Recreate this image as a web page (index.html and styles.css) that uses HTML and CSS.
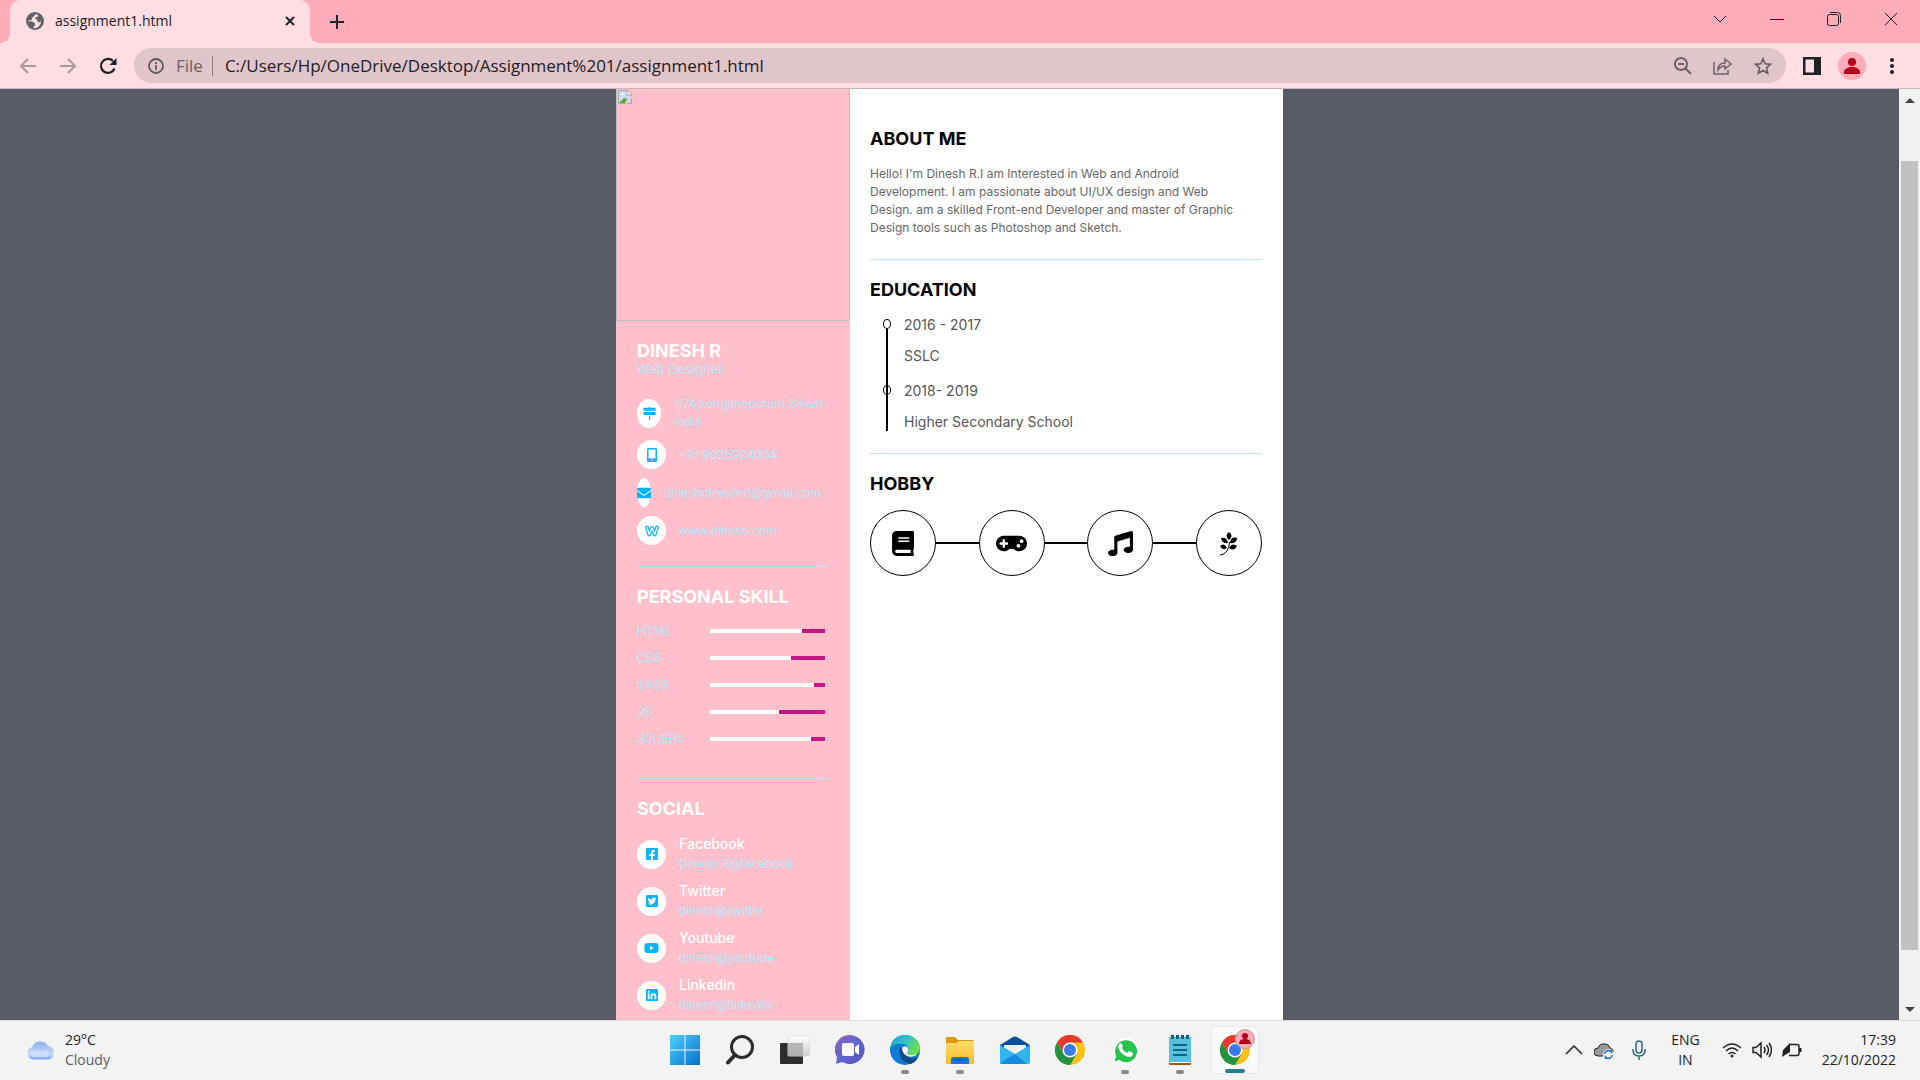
FILE: index.html
```html
<!DOCTYPE html>
<html lang="en">
<head>
<meta charset="utf-8">
<title>assignment1.html</title>
<link rel="stylesheet" href="styles.css">
</head>
<body>
<header class="tabstrip">
  <div class="tab">
    <svg class="favicon" viewBox="0 0 18 18"><circle cx="9" cy="9" r="9" fill="#5f6368"/><path d="M10 2c-2 1-1 2-3 3s0 2-2 3-3 0-3 2c1-1 4-1 5 0s2 0 2 2-1 2-2 4c5 1 8-3 8-7-1 1-2 2-3 1s0-2-2-3 0-2 1-2 1-1 1-2z" fill="#ffdde3"/></svg>
    <span class="tab-title">assignment1.html</span>
    <button class="icon-btn" aria-label="Close tab"><svg width="10" height="10" viewBox="0 0 10 10"><path d="M1 1l8 8M9 1l-8 8" stroke="#202124" stroke-width="2"/></svg></button>
  </div>
  <button class="icon-btn new-tab" aria-label="New tab"><svg width="16" height="16" viewBox="0 0 16 16"><path d="M8 1v14M1 8h14" stroke="#202124" stroke-width="2"/></svg></button>
  <div class="window-controls">
    <button class="icon-btn" aria-label="Search tabs"><svg width="14" height="14" viewBox="0 0 14 14"><path d="M1 4l6 6 6-6"/></svg></button>
    <button class="icon-btn" aria-label="Minimize"><svg width="14" height="14" viewBox="0 0 14 14"><path d="M0 7.500h14"/></svg></button>
    <button class="icon-btn" aria-label="Restore"><svg width="14" height="14" viewBox="0 0 14 14"><rect x=".5" y="2.500" width="11" height="11" rx="2"/><path d="M3 .5h7.500a3 3 0 0 1 3 3V11"/></svg></button>
    <button class="icon-btn" aria-label="Close"><svg width="14" height="14" viewBox="0 0 14 14"><path d="M1 1l12 12M13 1L1 13"/></svg></button>
  </div>
</header>
<nav class="toolbar">
  <div class="nav-buttons">
    <button class="icon-btn" aria-label="Back"><svg width="18" height="18" viewBox="0 0 18 18" fill="none" stroke="#aa979c" stroke-width="2"><path d="M17 9H2M9 2L2 9l7 7"/></svg></button>
    <button class="icon-btn" aria-label="Forward"><svg width="18" height="18" viewBox="0 0 18 18" fill="none" stroke="#aa979c" stroke-width="2"><path d="M1 9h15M9 2l7 7-7 7"/></svg></button>
    <button class="icon-btn" aria-label="Reload"><svg width="18" height="18" viewBox="0 0 18 18" fill="none" stroke="#202124" stroke-width="2.200"><path d="M15.500 11.500A7 7 0 1 1 14 4"/><path d="M17.500 1v7h-7z" fill="#202124" stroke="none"/></svg></button>
  </div>
  <div class="omnibox">
    <svg width="16" height="16" viewBox="0 0 16 16" fill="none" stroke="#5f5a5e" stroke-width="1.800"><circle cx="8" cy="8" r="7"/><path d="M8 7v5M8 4v2"/></svg>
    <label class="scheme" for="url">File</label>
    <input class="url" id="url" type="text" value="C:/Users/Hp/OneDrive/Desktop/Assignment%201/assignment1.html">
    <div class="omni-actions">
      <button class="icon-btn" aria-label="Zoom"><svg width="18" height="18" viewBox="0 0 18 18"><circle cx="7" cy="7" r="6"/><path d="M4 7h6M11 11l6 6"/></svg></button>
      <button class="icon-btn" aria-label="Share"><svg width="20" height="18" viewBox="0 0 20 18"><path d="M1 5v12h14v-4M5 13c0-5 3-7 7-7V2l6 5-6 5V9c-3 0-5 1-7 4z" stroke-width="1.500"/></svg></button>
      <button class="icon-btn" aria-label="Bookmark"><svg width="18" height="18" viewBox="0 0 18 18"><path d="M9 1.800l2.200 5 5.300.500-4 3.600 1.200 5.300L9 13.400l-4.700 2.800 1.200-5.300-4-3.600 5.300-.5z" stroke-width="1.700"/></svg></button>
    </div>
  </div>
  <button class="icon-btn" aria-label="Side panel"><svg width="18" height="18" viewBox="0 0 18 18"><path d="M0 0h18v18H0z" fill="#202124"/><path d="M2.500 2.500H11v13H2.500z" fill="#ffdde3"/></svg></button>
  <button class="icon-btn" aria-label="Profile"><svg width="28" height="28" viewBox="0 0 28 28"><circle cx="14" cy="14" r="14" fill="#ffacba"/><circle cx="14" cy="10" r="4" fill="#b3001b"/><path d="M6 22v-2c0-3 4-5 8-5s8 2 8 5v2z" fill="#b3001b"/></svg></button>
  <button class="icon-btn" aria-label="Menu"><svg width="18" height="18" viewBox="0 0 18 18" fill="#202124"><circle cx="9" cy="3" r="2"/><circle cx="9" cy="9" r="2"/><circle cx="9" cy="15" r="2"/></svg></button>
</nav>

<div class="viewport">
  <main class="page">
    <article class="resume">
      <aside class="left">
        <div class="photo" role="img" aria-label="Profile photo"><svg width="14" height="14" viewBox="0 0 14 14"><path d="M.5.5H9L13.500 5v8.500H.5z" fill="#c8dcf8" stroke="#a8a8a8"/><path d="M9 0v5h5z" fill="#fff" stroke="#a8a8a8"/><path d="M3 5a2 2 0 0 1 4 0z" fill="#fff"/><path d="M1 13l5-5 3 1-2 4z" fill="#4fae32"/><path d="M7 14l2-4 5-4v2l-4 4-1 2z" fill="#ffc0cb"/></svg></div>
        <section class="block intro">
          <h1 class="heading">DINESH R</h1>
          <p class="role">Web Designer</p>
          <ul class="contacts">
            <li><span class="badge narrow"><svg width="13" height="13" viewBox="0 0 512 512"><path d="M232 0h48v32h216v112H16V32h216zM16 200h480v112H16zM232 360h48v152h-48z"/></svg></span><span>1/74,konganapuram,Salem India</span></li>
            <li><span class="badge"><svg width="10" height="14" viewBox="0 0 10 14"><path fill-rule="evenodd" d="M1.500 0h7Q10 0 10 1.500v11Q10 14 8.500 14h-7Q0 14 0 12.500v-11Q0 0 1.500 0zM1.500 1.500v9h7v-9zM5 11.500a.7.7 0 1 0 .1 0z"/></svg></span><span>+91 9025924004</span></li>
            <li><span class="badge slim"><svg width="14" height="14" viewBox="0 0 512 512"><path d="M502.300 190.800c3.900-3.100 9.700-.2 9.700 4.700V400c0 26.500-21.500 48-48 48H48c-26.500 0-48-21.500-48-48V195.600c0-5 5.700-7.800 9.700-4.700 22.400 17.400 52.100 39.500 154.100 113.600 21.100 15.400 56.700 47.800 92.200 47.600 35.700.3 72-32.800 92.300-47.600 102-74.100 131.600-96.300 154-113.700zM256 320c23.200.4 56.600-29.200 73.400-41.400 132.700-96.300 142.800-104.700 173.400-128.700 5.800-4.500 9.200-11.500 9.200-18.900v-19c0-26.500-21.500-48-48-48H48c-26.500 0-48 21.500-48 48v19c0 7.400 3.400 14.300 9.200 18.900 30.600 23.900 40.700 32.400 173.400 128.700 16.800 12.200 50.200 41.800 73.400 41.400z"/></svg></span><span>dineshdineshrd@gmail.com</span></li>
            <li><span class="badge"><svg width="14" height="12" viewBox="0 0 14 12"><path d="M2 2.500l2.200 7L7 3l2.800 6.500 2.200-7" fill="none" stroke="#0ab4f5" stroke-width="3.800" stroke-linejoin="round" stroke-linecap="round"/><path d="M2 2.500l2.200 7L7 3l2.800 6.500 2.200-7" fill="none" stroke="#fff" stroke-width="1.300" stroke-linejoin="round" stroke-linecap="round"/></svg></span><span>www.dinesh.com</span></li>
          </ul>
        </section>
        <section class="block skills">
          <h2 class="heading">PERSONAL SKILL</h2>
          <ul class="skill-list">
            <li><span>HTML</span><span class="bar"><span class="fill" style="width:80%"></span></span></li>
            <li><span>CSS</span><span class="bar"><span class="fill" style="width:70%"></span></span></li>
            <li><span>SASS</span><span class="bar"><span class="fill" style="width:90%"></span></span></li>
            <li><span>JS</span><span class="bar"><span class="fill" style="width:60%"></span></span></li>
            <li><span>JQUERY</span><span class="bar"><span class="fill" style="width:88%"></span></span></li>
          </ul>
        </section>
        <section class="block social">
          <h2 class="heading">SOCIAL</h2>
          <ul class="social-list">
            <li><span class="badge"><svg width="12" height="14" viewBox="0 0 448 512"><path d="M400 32H48A48 48 0 0 0 0 80v352a48 48 0 0 0 48 48h137.250V327.690h-63V256h63v-54.640c0-62.150 37-96.480 93.670-96.480 27.140 0 55.520 4.840 55.520 4.840v61h-31.270c-30.810 0-40.420 19.120-40.420 38.730V256h68.780l-11 71.690h-57.780V480H400a48 48 0 0 0 48-48V80a48 48 0 0 0-48-48z"/></svg></span><span><b>Facebook</b>Dinesh R@facebook</span></li>
            <li><span class="badge"><svg width="12" height="14" viewBox="0 0 448 512"><path d="M400 32H48C21.500 32 0 53.500 0 80v352c0 26.500 21.500 48 48 48h352c26.500 0 48-21.500 48-48V80c0-26.500-21.500-48-48-48zm-48.900 158.800c.2 2.800.2 5.700.2 8.500 0 86.700-66 186.600-186.600 186.600-37.200 0-71.700-10.800-100.700-29.400 5.300.6 10.400.8 15.800.8 30.700 0 58.900-10.400 81.400-28-28.800-.6-53-19.500-61.300-45.500 10.100 1.500 19.200 1.500 29.600-1.200-30-6.100-52.500-32.500-52.500-64.400v-.8c8.700 4.900 18.900 7.900 29.600 8.300a65.447 65.447 0 0 1-29.200-54.600c0-12.200 3.200-23.400 8.900-33.100 32.300 39.800 80.800 65.800 135.200 68.600-9.300-44.500 24-80.600 64-80.600 18.900 0 35.900 7.900 47.900 20.700 14.800-2.800 29-8.300 41.600-15.800-4.900 15.200-15.200 28-28.800 36.100 13.200-1.400 26-5.100 37.800-10.200-8.900 13.100-20.100 24.700-32.900 34z"/></svg></span><span><b>Twitter</b>dinesh@twitter</span></li>
            <li><span class="badge"><svg width="15" height="14" viewBox="0 0 576 512"><path d="M549.655 124.083c-6.281-23.650-24.787-42.276-48.284-48.597C458.781 64 288 64 288 64S117.220 64 74.629 75.486c-23.497 6.322-42.003 24.947-48.284 48.597-11.412 42.867-11.412 132.305-11.412 132.305s0 89.438 11.412 132.305c6.281 23.650 24.787 41.500 48.284 47.821C117.220 448 288 448 288 448s170.780 0 213.371-11.486c23.497-6.321 42.003-24.171 48.284-47.821 11.412-42.867 11.412-132.305 11.412-132.305s0-89.438-11.412-132.305zm-317.510 213.508V175.185l142.739 81.205-142.739 81.201z"/></svg></span><span><b>Youtube</b>dinesh@youtube</span></li>
            <li><span class="badge"><svg width="12" height="14" viewBox="0 0 448 512"><path d="M416 32H31.900C14.300 32 0 46.500 0 64.300v383.400C0 465.500 14.300 480 31.900 480H416c17.600 0 32-14.500 32-32.300V64.300c0-17.800-14.400-32.300-32-32.300zM135.400 416H69V202.200h66.500V416zm-33.200-243c-21.300 0-38.500-17.300-38.500-38.500S80.900 96 102.200 96c21.200 0 38.500 17.300 38.500 38.500 0 21.300-17.200 38.500-38.500 38.500zm282.100 243h-66.400V312c0-24.800-.5-56.700-34.500-56.700-34.600 0-39.900 27-39.900 54.900V416h-66.400V202.200h63.700v29.200h.9c8.900-16.800 30.600-34.500 62.900-34.500 67.200 0 79.700 44.300 79.700 101.900V416z"/></svg></span><span><b>Linkedin</b>dinesh@linkedin</span></li>
          </ul>
        </section>
      </aside>
      <div class="right">
        <section class="section about">
          <h2 class="heading">ABOUT ME</h2>
          <p>Hello! I'm Dinesh R.I am Interested in Web and Android<br>Development. I am passionate about UI/UX design and Web<br>Design. am a skilled Front-end Developer and master of Graphic<br>Design tools such as Photoshop and Sketch.</p>
        </section>
        <section class="section education">
          <h2 class="heading">EDUCATION</h2>
          <ol class="timeline">
            <li><span class="dot solid"></span><p>2016 - 2017</p><p>SSLC</p></li>
            <li><span class="dot"></span><p>2018- 2019</p><p>Higher Secondary School</p></li>
          </ol>
        </section>
        <section class="section hobby">
          <h2 class="heading">HOBBY</h2>
          <div class="hobbies">
            <span class="ring"><svg width="22" height="25" viewBox="0 0 448 512"><path d="M448 360V24c0-13.300-10.700-24-24-24H96C43 0 0 43 0 96v320c0 53 43 96 96 96h328c13.300 0 24-10.700 24-24v-16c0-7.500-3.500-14.300-8.900-18.700-4.200-15.400-4.200-59.300 0-74.700 5.400-4.300 8.900-11.100 8.900-18.600zM128 134c0-3.300 2.700-6 6-6h212c3.300 0 6 2.700 6 6v20c0 3.300-2.700 6-6 6H134c-3.300 0-6-2.700-6-6v-20zm0 64c0-3.300 2.700-6 6-6h212c3.300 0 6 2.700 6 6v20c0 3.300-2.700 6-6 6H134c-3.300 0-6-2.700-6-6v-20zm253.400 250H96c-17.700 0-32-14.300-32-32 0-17.600 14.400-32 32-32h285.400c-1.900 17.100-1.900 46.900 0 64z"/></svg></span>
            <span class="link"></span>
            <span class="ring"><svg width="31" height="25" viewBox="0 0 640 512"><path d="M480.070 96H160a160 160 0 1 0 114.240 272h91.500A160 160 0 1 0 480.070 96zM248 268a12 12 0 0 1-12 12h-52v52a12 12 0 0 1-12 12h-24a12 12 0 0 1-12-12v-52H84a12 12 0 0 1-12-12v-24a12 12 0 0 1 12-12h52v-52a12 12 0 0 1 12-12h24a12 12 0 0 1 12 12v52h52a12 12 0 0 1 12 12zm216 76a40 40 0 1 1 40-40 40 40 0 0 1-40 40zm64-96a40 40 0 1 1 40-40 40 40 0 0 1-40 40z"/></svg></span>
            <span class="link"></span>
            <span class="ring"><svg width="25" height="25" viewBox="0 0 512 512"><path d="M511.990 32.010c0-21.710-21.100-37.010-41.600-30.510L150.400 96c-13.300 4.200-22.400 16.500-22.400 30.500v261.420c-10.050-2.380-20.720-3.920-32-3.920-53.020 0-96 28.650-96 64s42.980 64 96 64 96-28.650 96-64V214.310l256-75.020v184.630c-10.050-2.380-20.720-3.920-32-3.920-53.020 0-96 28.650-96 64s42.980 64 96 64 96-28.650 96-64l-.01-351.990z"/></svg></span>
            <span class="link"></span>
            <span class="ring"><svg width="20" height="25" viewBox="0 0 20 25"><path d="M1 24q9-1 9.500-13" fill="none" stroke="#000"/><path d="M10 9Q5 4 10 1q5 4 0 8zM9 12Q3 13 2 7q6-1 7 5zM11 12q1-7 7-5 0 6-7 5zM8 17q-5 3-7-2 4-4 7 2zM10 17q3-6 8-2-3 6-8 2z"/></svg></span>
          </div>
        </section>
      </div>
    </article>
  </main>
  <div class="scrollbar">
    <button class="scroll-btn" aria-label="Scroll up"><svg width="10" height="5" viewBox="0 0 10 5"><path d="M0 5l5-5 5 5z"/></svg></button>
    <div class="track"><div class="thumb"></div></div>
    <button class="scroll-btn" aria-label="Scroll down"><svg width="10" height="5" viewBox="0 0 10 5"><path d="M0 0l5 5 5-5z"/></svg></button>
  </div>
</div>

<svg class="defs" width="0" height="0">
  <defs>
    <linearGradient id="win" x1="0" y1="0" x2="1" y2="1"><stop offset="0" stop-color="#4fd0fb"/><stop offset="1" stop-color="#0470cf"/></linearGradient>
    <linearGradient id="cloud" x1="0" y1="0" x2="0" y2="1"><stop offset="0" stop-color="#88aef0"/><stop offset=".7" stop-color="#c8dafa"/><stop offset="1" stop-color="#7aa3ee"/></linearGradient>
    <linearGradient id="chat" x1="0" y1="0" x2="1" y2="1"><stop offset="0" stop-color="#9267b4"/><stop offset=".5" stop-color="#6264cf"/><stop offset="1" stop-color="#4f56c9"/></linearGradient>
    <linearGradient id="edge" x1="0" y1="0" x2="1" y2=".5"><stop offset="0" stop-color="#1f9fd8"/><stop offset=".5" stop-color="#2dc1cc"/><stop offset="1" stop-color="#6be04a"/></linearGradient>
    <linearGradient id="glass" x1="0" y1="0" x2="0" y2="1"><stop offset="0" stop-color="#fff"/><stop offset="1" stop-color="#c9c9c9"/></linearGradient>
    <linearGradient id="folder" x1="0" y1="0" x2="0" y2="1"><stop offset="0" stop-color="#ffdc6a"/><stop offset="1" stop-color="#f9bd2b"/></linearGradient>
    <symbol id="chrome" viewBox="0 0 30 30"><circle cx="15" cy="15" r="15" fill="#fbc116"/><path d="M2 7.500A15 15 0 0 1 28 7.500H15L8.500 18.700z" fill="#e33b2e"/><path d="M2 7.500a15 15 0 0 0 13 22.500l6.500-11.200H8.500z" fill="#229342"/><path d="M8.500 18.700h13L15 30z" fill="#229342"/><circle cx="15" cy="15" r="7.500" fill="#fff"/><circle cx="15" cy="15" r="6" fill="#3b7aed"/></symbol>
  </defs>
</svg>

<footer class="taskbar">
  <button class="weather">
    <svg width="30" height="20" viewBox="0 0 30 20"><path d="M7 19.500a6.500 6.500 0 0 1-1-12.500A9 9 0 0 1 22 6a7 7 0 0 1 1 13.500z" fill="url(#cloud)"/><path d="M2 14q3-6 9-4 3 1 3 4 3-5 9-4l-1 7H7z" fill="#d3e2fb" opacity=".6"/></svg>
    <span class="two-line">29°C<small>Cloudy</small></span>
  </button>
  <div class="apps">
    <button class="app" aria-label="Start"><svg width="30" height="30" viewBox="0 0 30 30"><path d="M0 0h14.500v14.500H0zM15.500 0H30v14.500H15.500zM0 15.500h14.500V30H0zM15.500 15.500H30V30H15.500z" fill="url(#win)"/></svg></button>
    <button class="app" aria-label="Search"><svg width="30" height="30" viewBox="0 0 30 30" fill="none" stroke="#2b2b2b"><circle cx="17" cy="12" r="10.500" stroke-width="3"/><path d="M10 20l-7 7.500" stroke-width="4" stroke-linecap="round"/></svg></button>
    <button class="app" aria-label="Task view"><svg width="30" height="30" viewBox="0 0 30 30"><rect y="8" width="23" height="21" rx="1" fill="#2d2d2d"/><rect x="8" y="1" width="22" height="20" rx="1" fill="url(#glass)" stroke="#ddd" opacity=".9"/><path d="M8 8h15v13H8z" fill="#aaa" opacity=".7"/></svg></button>
    <button class="app" aria-label="Chat"><svg width="30" height="30" viewBox="0 0 30 30"><path d="M15 0a15 14.500 0 1 1-8 27l-6 2 1-7A15 14.500 0 0 1 15 0z" fill="url(#chat)"/><rect x="7" y="8" width="12" height="13" rx="2" fill="#fff"/><path d="M20 12l4-3v11l-4-3z" fill="#fff"/></svg></button>
    <button class="app running" aria-label="Edge"><svg width="30" height="30" viewBox="0 0 30 30"><circle cx="15" cy="15" r="15" fill="#0f7bd4"/><path d="M0 14C1 5 7 0 15 0c9 0 15 6 15 13 0 5-4 8-9 7-3 0-5-1-3-3 2-3 0-8-5-8C6 8 2 10 0 14z" fill="url(#edge)"/><path d="M10 12c-3 9 3 16 11 17 4-2 6-4 7-7-5 3-13 1-14-6z" fill="#114a8b"/><path d="M12 14c0-3 5-4 6-1 1 2 0 4-1 5 0 2 4 3 10 1-4 5-14 3-15-5z" fill="#f3f3f3"/></svg></button>
    <button class="app running" aria-label="File Explorer"><svg width="30" height="30" viewBox="0 0 30 30"><path d="M1 3q0-1 1-1h8l3 3h15q1 0 1 1v8H1z" fill="#dd9a0a"/><path d="M1 8h10l3-2h15v22q0 1-1 1H2q-1 0-1-1z" fill="url(#folder)"/><path d="M6 29v-5q0-2 2-2h14q2 0 2 2v5z" fill="#1677cf"/><path d="M9 25h12" stroke="#0c4d92" stroke-width="1"/></svg></button>
    <button class="app" aria-label="Mail"><svg width="30" height="30" viewBox="0 0 30 30"><path d="M0 10L13 2q2-1 4 0l13 8v5H0z" fill="#0a4f9f"/><path d="M4 10h22v11H4z" fill="#eee"/><path d="M0 10l15 9 15-9v17q0 2-2 2H2q-2 0-2-2z" fill="#32b4ee"/><path d="M0 28l15-9 12 10H1z" fill="#168bdd"/></svg></button>
    <button class="app" aria-label="Chrome"><svg width="30" height="30"><use href="#chrome"/></svg></button>
    <button class="app running" aria-label="WhatsApp"><svg width="30" height="30" viewBox="0 0 30 30"><path d="M3 28l2-7a12 12 0 1 1 4 5z" fill="#25c44c" stroke="#fff" stroke-width="2"/><path d="M11 8l2 3-1 2q2 4 5 5l2-2 4 2q0 4-4 4C13 21 8 15 8 11q1-3 3-3z" fill="#fff"/></svg></button>
    <button class="app running" aria-label="Notepad"><svg width="30" height="30" viewBox="0 0 30 30"><rect x="4" y="26" width="22" height="4" rx="1" fill="#a3540d"/><rect x="4" y="2" width="22" height="25" rx="1" fill="#55c1dc"/><path d="M4 27.500h22" stroke="#fff"/><path d="M6 2h20" stroke="#0c5f78" stroke-width="4" stroke-dasharray="3 2"/><path d="M8 10h14M8 15h14M8 20h14" stroke="#0c6584" stroke-width="2"/></svg></button>
    <button class="app active" aria-label="Chrome window"><svg width="40" height="36" viewBox="0 0 40 36"><use href="#chrome" x="5" y="6" width="30" height="30"/><circle cx="30" cy="10" r="9.500" fill="#ffacba" stroke="#b0a0a4"/><circle cx="30" cy="7" r="3" fill="#b3001b"/><path d="M24 15q0-5 6-5t6 5z" fill="#b3001b"/></svg></button>
  </div>
  <div class="tray">
    <button class="icon-btn" aria-label="Hidden icons"><svg viewBox="0 0 20 20"><path d="M2 14l8-8 8 8"/></svg></button>
    <button class="icon-btn" aria-label="OneDrive"><svg viewBox="0 0 20 20"><path d="M4 16a4 4 0 0 1 0-8q2-5 7-4 4 0 5 4 4 1 3 5l-4 3z" fill="#999" stroke="#222" stroke-width="1"/><circle cx="14.500" cy="14.500" r="5.500" fill="#f3f3f3" stroke="none"/><path d="M10.500 14a4 4 0 0 1 7-2v-2m1 5a4 4 0 0 1-7 2v2" stroke="#0a6fd0"/></svg></button>
    <button class="icon-btn mic" aria-label="Microphone"><svg viewBox="0 0 20 20"><rect x="7" y="1" width="6" height="12" rx="3"/><path d="M4 9v1q0 6 6 6t6-6V9M10 16v4"/></svg></button>
    <button class="two-line lang">ENG<span>IN</span></button>
    <button class="icon-btn" aria-label="Wi-Fi"><svg viewBox="0 0 20 20"><path d="M1 8q9-8 18 0M4 11q6-6 12 0M6.500 14q3.500-3 7 0"/><circle cx="10" cy="16" r="1.500" fill="#222" stroke="none"/></svg></button>
    <button class="icon-btn" aria-label="Volume"><svg viewBox="0 0 20 20"><path d="M1 7.500h3l5-4.500v14l-5-4.500H1zM12 7q2 3 0 6M14.500 5q4 5 0 10M17 3q5 7 0 14"/></svg></button>
    <button class="icon-btn" aria-label="Battery"><svg viewBox="0 0 20 20"><path d="M7 4.500h8q2 0 2 2v7q0 2-2 2H7"/><path d="M17 8h2.500v4H17zM0 17l1-7 7-7v9l-5 3z" fill="#222" stroke="none"/></svg></button>
    <button class="two-line clock">17:39<span>22/10/2022</span></button>
  </div>
</footer>
</body>
</html>
```
FILE: styles.css
```css
* { box-sizing: border-box; margin: 0; padding: 0; }
body {
  display: flex;
  flex-direction: column;
  height: 100vh;
  overflow: hidden;
  font-family: "Open Sans", sans-serif;
  background: #585c67;
}
ul, ol { list-style: none; }
svg { display: block; flex: none; }
button { border: 0; background: none; font: inherit; color: inherit; }
.icon-btn { display: grid; place-items: center; flex: none; }
.defs { position: absolute; }

/* Browser chrome */
.tabstrip {
  display: flex;
  align-items: stretch;
  flex: none;
  height: 43px;
  padding: 0 1px 0 10px;
  background: #ffacba;
}
.tab {
  position: relative;
  display: flex;
  align-items: center;
  width: 300px;
  padding: 0 15px 2px 16px;
  border-radius: 10px 10px 0 0;
  background: #ffdde3;
}
.tab::before, .tab::after {
  content: "";
  position: absolute;
  bottom: 0;
  width: 10px;
  height: 10px;
}
.tab::before { left: -10px; background: radial-gradient(circle at 0 0, #ffacba 10px, #ffdde3 10px); }
.tab::after { right: -10px; background: radial-gradient(circle at 100% 0, #ffacba 10px, #ffdde3 10px); }
.favicon { width: 18px; height: 18px; margin-right: 11px; }
.tab-title { flex: 1; font-size: 14px; color: #202124; }
.new-tab { width: 34px; margin-left: 10px; }
.window-controls { display: flex; margin-left: auto; }
.window-controls .icon-btn { width: 57px; padding-bottom: 6px; }
.window-controls svg { fill: none; stroke: #222; stroke-width: 1; }
.toolbar {
  display: flex;
  align-items: center;
  flex: none;
  gap: 17px;
  height: 46px;
  padding: 0 19px;
  border-bottom: 1px solid #c9b2b8;
  background: #ffdde3;
}
.nav-buttons { display: flex; gap: 22px; }
.omnibox {
  display: flex;
  align-items: center;
  flex: 1;
  height: 35px;
  padding: 0 14px;
  border-radius: 18px;
  background: #e0c5ca;
}
.scheme {
  margin: 0 12px;
  padding-right: 9px;
  border-right: 1px solid #8b7b7f;
  font-size: 17px;
  line-height: 20px;
  color: #6a6266;
}
.url {
  flex: 1;
  min-width: 0;
  border: 0;
  outline: 0;
  background: none;
  font: 17px/24px "Open Sans", sans-serif;
  color: #202124;
}
.omni-actions { display: flex; gap: 21px; }
.omni-actions svg { fill: none; stroke: #6a6266; stroke-width: 2; }

/* Document */
.viewport { display: flex; flex: 1; min-height: 0; }
.page { flex: 1; overflow: hidden; background: #585c67; }
.resume {
  display: grid;
  grid-template-columns: 234px 1fr;
  max-width: 667px;
  min-height: 100%;
  margin: 0 auto;
  background: #fff;
  font-family: Inter, sans-serif;
}
.heading { font-size: 18px; line-height: 20px; font-weight: 700; }
.left { background: #ffc0cb; font-size: 12px; color: #b3e5fc; }
.left .heading { color: #fff; }
.photo {
  height: 232px;
  padding: 1px;
  border: solid #c0c0c0;
  border-width: 0 1px 1px;
}
.block { margin: 0 21px; padding: 20px 0; }
.block + .block { border-top: 1px solid #b1e8ff; }
.role { font-size: 13px; line-height: 16px; }
.contacts { display: grid; gap: 9px; margin-top: 18px; line-height: 18px; }
.contacts li, .social-list li { display: flex; align-items: center; gap: 13px; }
.badge {
  display: grid;
  place-items: center;
  flex: none;
  width: 29px;
  height: 29px;
  border-radius: 50%;
  background: #fff;
}
.badge.narrow { width: 24px; }
.badge.slim { width: 14px; }
.badge svg { fill: #0ab4f5; }
.intro { padding-bottom: 21px; }
.skills { padding-bottom: 30px; }
.skill-list { display: grid; gap: 9px; margin-top: 15px; line-height: 18px; }
.skill-list li { display: grid; grid-template-columns: 73px 1fr; align-items: center; padding-right: 4px; }
.bar { display: block; height: 4px; background: #c71585; }
.fill { display: block; height: 100%; background: #fff; }
.social-list { display: grid; gap: 7px; margin-top: 15px; line-height: 20px; }
.social-list b { display: block; font-size: 14px; font-weight: 500; color: #fff; }

.right { padding: 20px 21px 0 20px; }
.section { padding: 20px 0; }
.section + .section { border-top: 1px solid #b9e6f5; }
.about { padding-bottom: 22px; }
.about p { margin-top: 16px; font-size: 12px; line-height: 18px; color: #666; white-space: nowrap; }
.timeline { position: relative; margin: 14px 0 0 13px; font-size: 14px; line-height: 22px; color: #555; }
.timeline::before {
  content: "";
  position: absolute;
  inset: 11px auto 2px 3px;
  width: 2px;
  background: #000;
}
.timeline li { position: relative; padding-left: 21px; }
.timeline li + li { margin-top: 13px; }
.timeline p + p { margin-top: 9px; }
.dot {
  position: absolute;
  left: 0;
  top: 5px;
  width: 8px;
  height: 10px;
  border: 1px solid #000;
  border-radius: 50%;
}
.solid { background: #fff; }
.hobbies { display: flex; align-items: center; margin-top: 16px; }
.ring {
  display: grid;
  place-items: center;
  width: 66px;
  height: 66px;
  border: 1px solid #000;
  border-radius: 50%;
}
.link { flex: 1; height: 2px; background: #000; }

.scrollbar { display: flex; flex-direction: column; flex: none; width: 21px; background: #f1f1f1; }
.scroll-btn { display: grid; place-items: center; height: 22px; fill: #444; }
.track { display: flex; flex-direction: column; flex: 1; padding: 50px 2px 48px; }
.thumb { flex: 1; background: #c1c1c1; }

/* Taskbar */
.taskbar {
  display: grid;
  grid-template-columns: 1fr auto 1fr;
  flex: none;
  height: 60px;
  box-shadow: inset 0 1px #e0e0e0;
  background: #f3f3f3;
  font-size: 14px;
  line-height: 20px;
  color: #222;
}
.weather { display: flex; align-items: center; gap: 9px; padding-left: 26px; text-align: left; }
.two-line { display: block; }
.two-line span, .two-line small { display: block; font-size: 14px; }
.two-line small { color: #5c5c5c; }
.apps { display: flex; align-items: center; gap: 7px; }
.app { position: relative; display: grid; place-items: center; width: 48px; height: 48px; border-radius: 5px; }
.running::after, .active::after {
  content: "";
  position: absolute;
  bottom: 0;
  width: 8px;
  height: 4px;
  border-radius: 2px;
  background: #888;
}
.active { padding-bottom: 6px; border: 1px solid #e8e8e8; background: #fafafa; }
.active::after { width: 20px; background: #27808f; }
.tray { display: flex; align-items: center; justify-content: flex-end; gap: 10px; padding-right: 24px; }
.tray svg { width: 20px; height: 20px; fill: none; stroke: #222; stroke-width: 1.5; }
.tray .mic { margin-left: 5px; }
.tray .mic svg { stroke: #2c6a7c; }
.lang { margin: 0 12px; }
.clock { margin-left: 10px; text-align: right; }
```
